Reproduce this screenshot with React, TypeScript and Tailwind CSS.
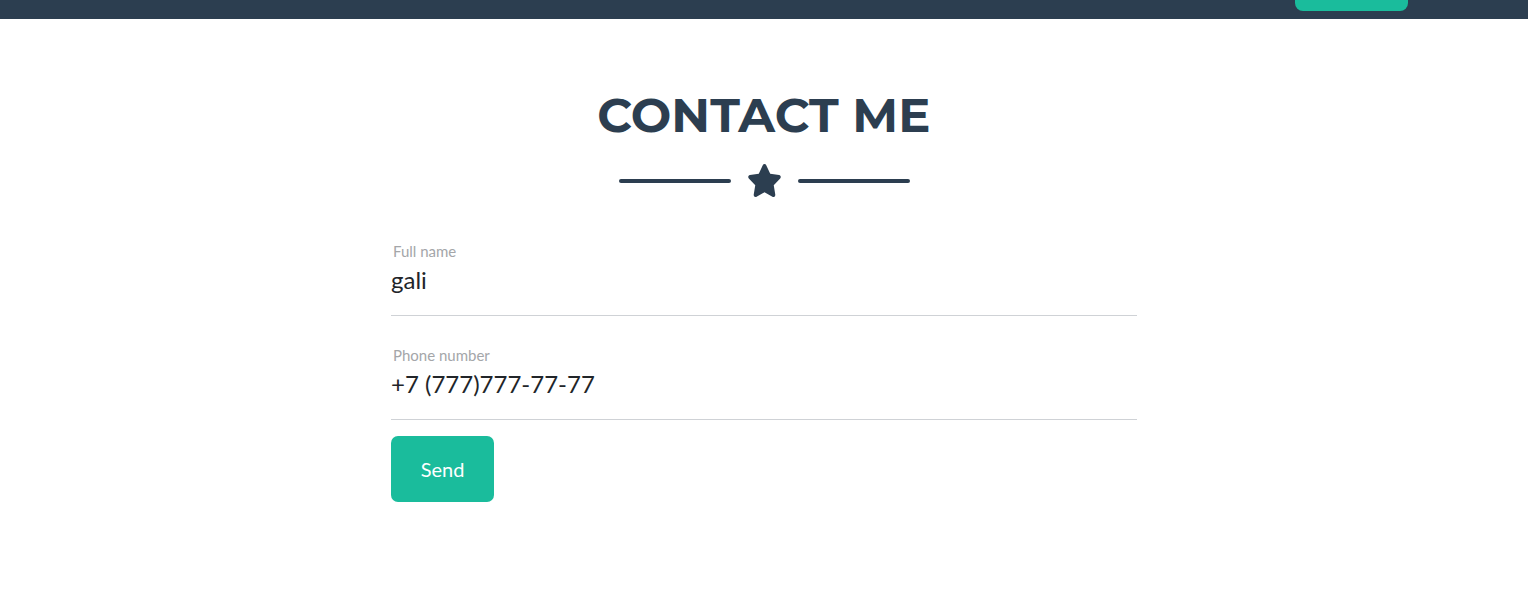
import React from "react";

function Star() {
  return (
    <svg viewBox="0 0 576 512" className="w-[35px] h-[33px] mx-4" preserveAspectRatio="none" fill="#2c3e50">
      <path d="M259.3 17.8L194 150.2 47.9 171.5c-26.2 3.8-36.7 36.1-17.7 54.6l105.7 103-25 145.5c-4.5 26.300 23.2 46 46.4 33.7L288 439.6l130.7 68.7c23.2 12.2 50.9-7.4 46.4-33.7l-25-145.5 105.7-103c19-18.500 8.5-50.8-17.7-54.6L382 150.2 316.7 17.8c-11.7-23.6-45.6-23.9-57.4 0z" />
    </svg>
  );
}

function Field({ label, value }: { label: string; value: string }) {
  return (
    <div className="border-b border-[#cfd2d6] pt-[30px] pb-[20px]">
      <div className="text-[15px] leading-[18px] text-[#a4a6a9] pl-[2px]">{label}</div>
      <div className="text-[24px] leading-[30px] text-[#212529] mt-[5px]">{value}</div>
    </div>
  );
}

export default function App() {
  return (
    <div className="min-h-[598px] bg-white" style={{ fontFamily: "Lato, 'Open Sans', sans-serif" }}>
      <nav className="h-[19px] bg-[#2c3e50] overflow-hidden flex justify-end pr-[120px]">
        <div className="w-[113px] h-[40px] -mt-[29px] bg-[#1abc9c] rounded-[8px]" />
      </nav>
      <section className="pt-[72px] flex flex-col items-center">
        <h2
          className="text-[48px] leading-[48px] font-bold text-[#2c3e50] uppercase tracking-[0.1px]"
          style={{ fontFamily: "Montserrat, Inter, sans-serif" }}
        >
          Contact Me
        </h2>
        <div className="flex items-center mt-[25px]">
          <div className="w-[112px] h-[4px] rounded-full bg-[#2c3e50]" />
          <Star />
          <div className="w-[112px] h-[4px] rounded-full bg-[#2c3e50]" />
        </div>
        <div className="w-[746px] mt-[15px]">
          <Field label="Full name" value="gali" />
          <Field label="Phone number" value="+7 (777)777-77-77" />
          <button className="mt-[16px] w-[103px] h-[66px] rounded-[7px] bg-[#1abc9c] text-white text-[20px]">
            Send
          </button>
        </div>
      </section>
    </div>
  );
}
